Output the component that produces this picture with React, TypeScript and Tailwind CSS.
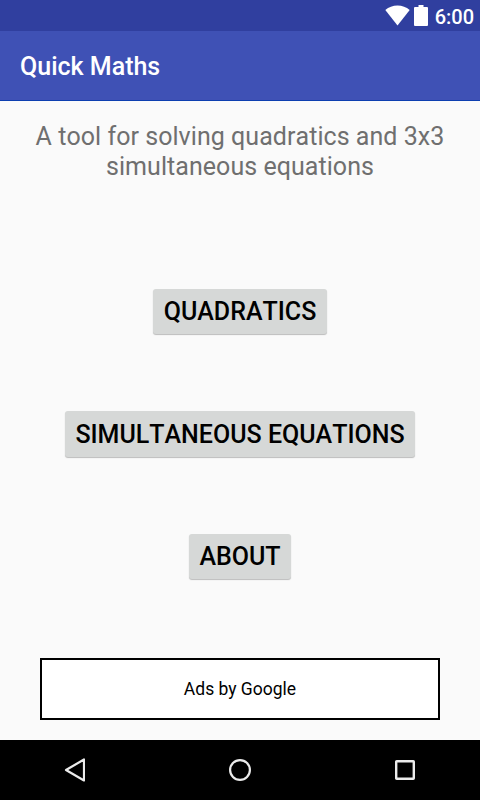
const BUTTONS = [
  { label: "Quadratics", size: "h-[45px] w-[174px]" },
  { label: "Simultaneous Equations", size: "h-[46px] w-[350px]" },
  { label: "About", size: "h-[45px] w-[102px]" },
];

function StatusBar() {
  return (
    <div className="flex h-[31px] shrink-0 items-center justify-end bg-[#303f9f] pr-[6px] text-white">
      <svg width="25" height="21" viewBox="0 0 25 21" fill="currentColor">
        <path d="M12.5 20.5 0.3 5Q5.5 0.5 12.5 0.5T24.7 5Z" />
      </svg>
      <svg className="ml-1" width="14" height="21" viewBox="0 0 14 21" fill="currentColor">
        <path d="M4.5 0h5v2H13a1 1 0 0 1 1 1v17a1 1 0 0 1-1 1H1a1 1 0 0 1-1-1V3a1 1 0 0 1 1-1h3.5z" />
      </svg>
      <span className="ml-[7px] pt-[2px] text-[20px] leading-none font-medium">6:00</span>
    </div>
  );
}

function NavBar() {
  return (
    <div className="flex h-[60px] shrink-0 items-center justify-between bg-black pr-[65px] pl-16 text-[#ebebeb]">
      <svg width="21" height="24" viewBox="0 0 21 24" fill="none" stroke="currentColor" strokeWidth="2.2" strokeLinejoin="round">
        <path d="M20 1.5v21L2 12z" />
      </svg>
      <svg width="24" height="24" viewBox="0 0 24 24" fill="none" stroke="currentColor" strokeWidth="2.2">
        <circle cx="12" cy="12" r="9.9" />
      </svg>
      <svg width="20" height="20" viewBox="0 0 20 20" fill="none" stroke="currentColor" strokeWidth="2.4">
        <rect x="1.2" y="1.2" width="17.6" height="17.6" rx="0.5" />
      </svg>
    </div>
  );
}

export default function App() {
  return (
    <div className="flex h-[800px] w-[480px] flex-col overflow-hidden bg-[#fafafa] font-[Roboto,sans-serif] antialiased">
      <StatusBar />
      <header className="flex h-[70px] shrink-0 items-center border-b border-[#0d3eb0] bg-[#3f51b5] pt-[2px] pl-5 text-[25px] font-medium text-white">
        Quick Maths
      </header>

      <main className="flex flex-1 flex-col items-center">
        <p className="mt-[21px] text-center text-[25px] leading-[30px] tracking-[0.05px] text-[#6f6f6f] [font-kerning:none]">
          A tool for solving quadratics and 3x3
          <br />
          simultaneous equations
        </p>

        <div className="mt-[107px] flex flex-col items-center gap-[77px]">
          {BUTTONS.map(({ label, size }) => (
            <button
              key={label}
              className={`rounded-[3px] bg-[#d6d8d7] text-[25px] leading-none font-medium whitespace-nowrap text-black uppercase shadow-[0_1px_1px_#00000040] [font-kerning:none] ${size}`}
            >
              {label}
            </button>
          ))}
        </div>

        <div className="mt-[79px] flex h-[62px] w-[400px] items-center justify-center border-2 border-black bg-white text-[17.5px] text-black">
          Ads by Google
        </div>
      </main>

      <NavBar />
    </div>
  );
}
